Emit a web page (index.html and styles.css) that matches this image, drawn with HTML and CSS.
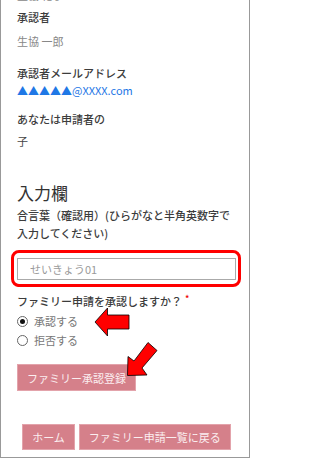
FILE: index.html
```html
<!DOCTYPE html>
<html lang="ja">
<head>
<meta charset="utf-8">
<title>ファミリー承認</title>
<link rel="stylesheet" href="styles.css">
</head>
<body>
<div class="page">
  <div class="value peek">生協 花子</div>
  <div class="label l1">承認者</div>
  <div class="value v1">生協 一郎</div>
  <div class="label l2">承認者メールアドレス</div>
  <div class="email">▲▲▲▲▲@XXXX.com</div>
  <div class="label l3">あなたは申請者の</div>
  <div class="value dark v2">子</div>
  <h2 class="section">入力欄</h2>
  <div class="label hint">合言葉（確認用）(ひらがなと半角英数字で入力してください)</div>
  <div class="frame"><input class="field" type="text" placeholder="せいきょう01"></div>
  <div class="label question">ファミリー申請を承認しますか？<span class="req">*</span></div>
  <div class="radios">
    <div class="radio"><span class="dot checked"></span>承認する</div>
    <div class="radio"><span class="dot"></span>拒否する</div>
  </div>
  <div class="actions"><button class="btn">ファミリー承認登録</button></div>
  <div class="nav">
    <button class="btn">ホーム</button>
    <button class="btn">ファミリー申請一覧に戻る</button>
  </div>
  <svg class="arrows" width="250" height="458" viewBox="0 0 250 458">
    <polygon points="94,322 106.5,308 106.5,315 128,315 128,329 106.5,329 106.5,336" fill="#f00" stroke="#000" stroke-width="0.8" stroke-linejoin="miter"/>
    <polygon points="126.5,375.5 127,356.5 133,361 147,342.5 156,350.5 141,368 146,375" fill="#f00" stroke="#000" stroke-width="0.8" stroke-linejoin="miter"/>
  </svg>
</div>
</body>
</html>
```
FILE: styles.css
```css
* { box-sizing: border-box; }
html, body { margin: 0; padding: 0; background: #fff; }
.page {
  position: relative;
  width: 250px;
  height: 458px;
  overflow: hidden;
  border: 1px solid #999;
  border-top: none;
  padding: 0 13px 0 16px;
  font-family: "Noto Sans CJK JP", "Noto Sans", sans-serif;
  font-size: 11px;
  line-height: 16px;
  color: #444;
}
.label { font-weight: 500; color: #3c3c3c; }
.value { color: #888; }
.value.dark { color: #444; }
.peek { margin-top: -13px; }
.l1 { margin-top: 6px; }
.v1 { margin-top: 7.5px; }
.l2 { margin-top: 16.5px; }
.email { margin-top: 0.5px; color: #1f78e6; }
.l3 { margin-top: 13px; }
.v2 { margin-top: 6px; }
.section {
  margin: 32px 0 0;
  font-size: 17px;
  line-height: 24px;
  font-weight: 400;
  color: #333;
}
.hint { margin-top: 2.5px; line-height: 17.5px; }
.frame {
  margin: 8px -5px 0 -6px;
  border: 3px solid #f00;
  border-radius: 8px;
  padding: 5px 2px 4px 3px;
}
.field {
  display: block;
  width: 100%;
  height: 22px;
  border: 1px solid #aaa;
  padding: 0 12px;
  font: inherit;
  font-size: 11px;
  color: #444;
  background: #fff;
  outline: none;
}
.field::placeholder { color: #9a9a9a; }
.question { margin-top: 6px; }
.req { color: #e00; font-size: 9px; margin-left: 3px; vertical-align: top; line-height: 12px; }
.radios { margin-top: 4px; display: flex; flex-direction: column; gap: 3px; }
.radio { display: flex; align-items: center; gap: 6px; color: #777; }
.dot {
  width: 11px;
  height: 11px;
  border: 1px solid #666;
  border-radius: 50%;
  display: flex;
  align-items: center;
  justify-content: center;
  flex: none;
}
.dot.checked::after {
  content: "";
  width: 5px;
  height: 5px;
  border-radius: 50%;
  background: #111;
}
.actions { margin-top: 16px; display: flex; }
.btn {
  font: inherit;
  font-size: 11px;
  line-height: 16px;
  height: 27px;
  padding: 0 9px;
  border: 1px solid #e3a3ab;
  background: #d5808a;
  color: #fbeef0;
  margin: 0;
}
.nav {
  margin-top: 33px;
  display: flex;
  justify-content: center;
  gap: 4px;
}
.nav .btn { height: 26px; }
.arrows { position: absolute; left: 0; top: 0; pointer-events: none; }
```
